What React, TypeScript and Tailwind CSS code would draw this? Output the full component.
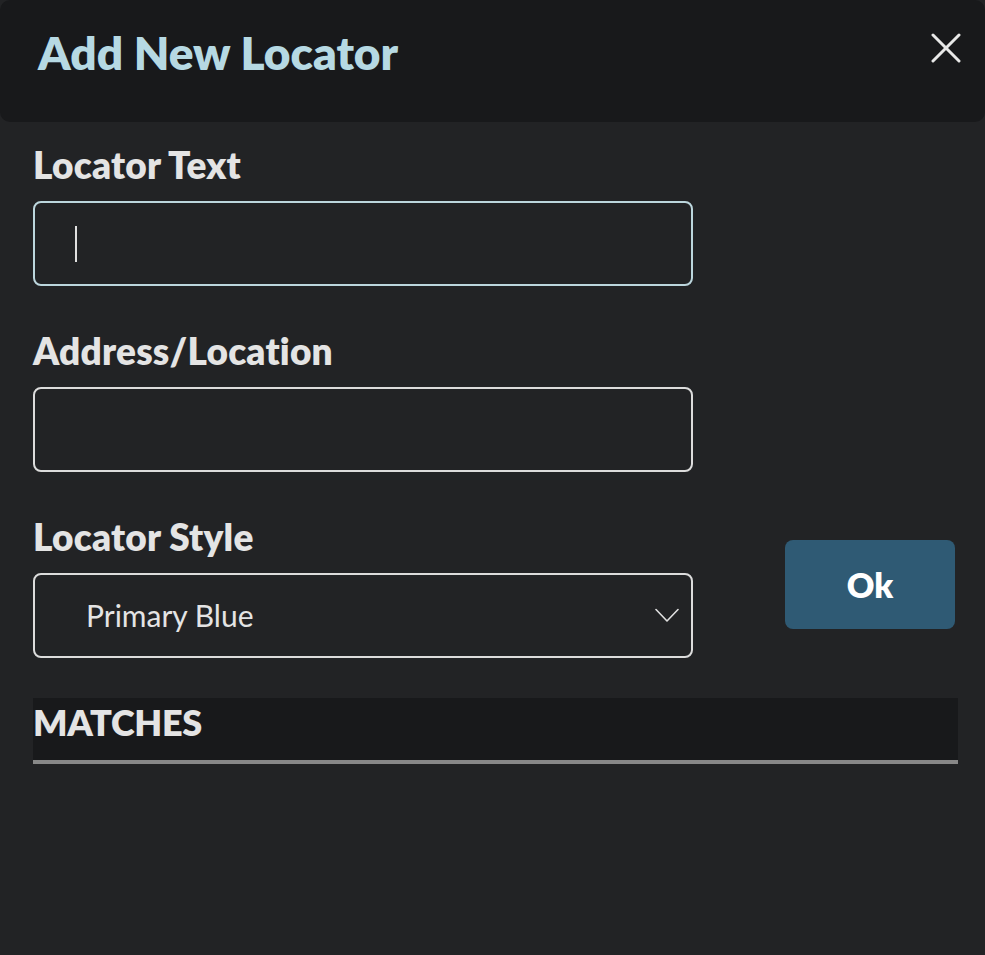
import React from "react";

const font = { fontFamily: "Lato, 'Open Sans', sans-serif" };

const Field: React.FC<{ label: string; focused?: boolean; children?: React.ReactNode }> = ({
    label,
    focused,
    children,
}) => (
    <div className="flex flex-col">
        <label className="text-[37px] font-extrabold tracking-[0.2px] text-[#e4e4e4] leading-[44px]">{label}</label>
        <div
            className={
                "mt-[14px] h-[85px] w-[660px] rounded-[8px] border-2 flex items-center " +
                (focused ? "border-[#bcd6dd]" : "border-[#dcdcdc]")
            }
        >
            {children}
        </div>
    </div>
);

export default function App() {
    const [style] = React.useState("Primary Blue");

    return (
        <div className="w-[985px] h-[955px] bg-[#222325] flex flex-col overflow-hidden" style={font}>
            <div className="h-[122px] shrink-0 bg-[#18191b] rounded-[10px] flex items-start justify-between pl-[38px] pr-[24px] pt-[25px]">
                <h1 className="text-[46px] font-extrabold text-[#b6d9e3] leading-[56px]">Add New Locator</h1>
                <button className="mt-[8px] text-[#e8e8e8]">
                    <svg width="30" height="30" viewBox="0 0 30 30" fill="none" stroke="currentColor" strokeWidth="3" strokeLinecap="round">
                        <line x1="2" y1="2" x2="28" y2="28" />
                        <line x1="28" y1="2" x2="2" y2="28" />
                    </svg>
                </button>
            </div>

            <div className="flex flex-col pl-[33px] pr-[30px] pt-[21px]">
                <Field label="Locator Text" focused>
                    <span className="ml-[40px] w-[2px] h-[36px] bg-[#e0e0e0]" />
                </Field>

                <div className="mt-[43px]">
                    <Field label="Address/Location" />
                </div>

                <div className="mt-[43px] flex items-start justify-between">
                    <Field label="Locator Style">
                        <div className="flex-1 flex items-center justify-between pl-[51px] pr-[12px]">
                            <span className="text-[30px] text-[#e4e4e4]">{style}</span>
                            <svg width="24" height="15" viewBox="0 0 24 15" fill="none" stroke="#e0e0e0" strokeWidth="1.6" strokeLinecap="round" strokeLinejoin="round">
                                <polyline points="1,1.5 12,13 23,1.5" />
                            </svg>
                        </div>
                    </Field>
                    <button className="mt-[25px] w-[170px] h-[89px] rounded-[8px] bg-[#2f5a74] text-white text-[34px] font-extrabold">
                        Ok
                    </button>
                </div>

                <div className="mt-[40px] mr-[-3px] h-[66px] bg-[#18191b] border-b-4 border-[#888888] flex items-start pt-[2px]">
                    <span className="text-[36px] leading-[44px] font-extrabold tracking-[-0.3px] text-[#e4e4e4]">MATCHES</span>
                </div>
            </div>
        </div>
    );
}
